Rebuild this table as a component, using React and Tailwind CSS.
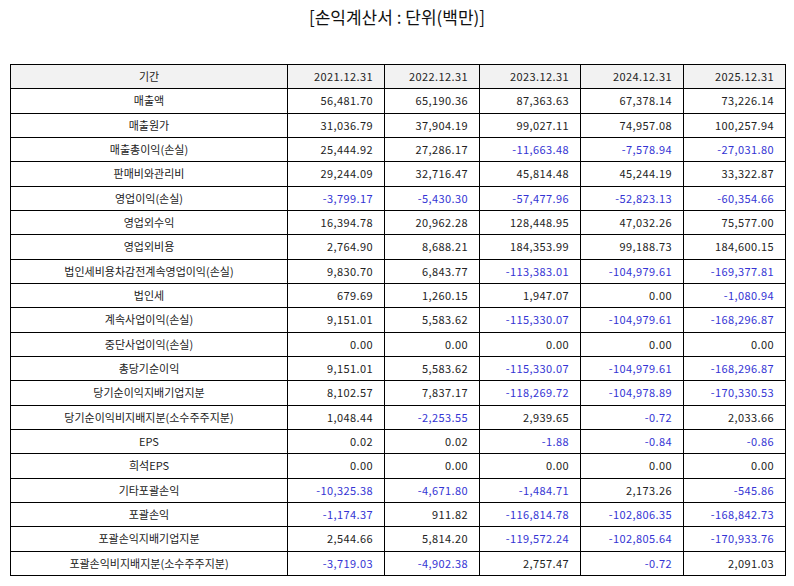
import React from 'react';

const YEARS = ['2021.12.31', '2022.12.31', '2023.12.31', '2024.12.31', '2025.12.31'];
const COL_W = ['w-[277px]', 'w-[97px]', 'w-[95px]', 'w-[101px]', 'w-[103px]', 'w-[102px]'];

const ROWS = [
  ['매출액', '56,481.70', '65,190.36', '87,363.63', '67,378.14', '73,226.14'],
  ['매출원가', '31,036.79', '37,904.19', '99,027.11', '74,957.08', '100,257.94'],
  ['매출총이익(손실)', '25,444.92', '27,286.17', '-11,663.48', '-7,578.94', '-27,031.80'],
  ['판매비와관리비', '29,244.09', '32,716.47', '45,814.48', '45,244.19', '33,322.87'],
  ['영업이익(손실)', '-3,799.17', '-5,430.30', '-57,477.96', '-52,823.13', '-60,354.66'],
  ['영업외수익', '16,394.78', '20,962.28', '128,448.95', '47,032.26', '75,577.00'],
  ['영업외비용', '2,764.90', '8,688.21', '184,353.99', '99,188.73', '184,600.15'],
  ['법인세비용차감전계속영업이익(손실)', '9,830.70', '6,843.77', '-113,383.01', '-104,979.61', '-169,377.81'],
  ['법인세', '679.69', '1,260.15', '1,947.07', '0.00', '-1,080.94'],
  ['계속사업이익(손실)', '9,151.01', '5,583.62', '-115,330.07', '-104,979.61', '-168,296.87'],
  ['중단사업이익(손실)', '0.00', '0.00', '0.00', '0.00', '0.00'],
  ['총당기순이익', '9,151.01', '5,583.62', '-115,330.07', '-104,979.61', '-168,296.87'],
  ['당기순이익지배기업지분', '8,102.57', '7,837.17', '-118,269.72', '-104,978.89', '-170,330.53'],
  ['당기순이익비지배지분(소수주주지분)', '1,048.44', '-2,253.55', '2,939.65', '-0.72', '2,033.66'],
  ['EPS', '0.02', '0.02', '-1.88', '-0.84', '-0.86'],
  ['희석EPS', '0.00', '0.00', '0.00', '0.00', '0.00'],
  ['기타포괄손익', '-10,325.38', '-4,671.80', '-1,484.71', '2,173.26', '-545.86'],
  ['포괄손익', '-1,174.37', '911.82', '-116,814.78', '-102,806.35', '-168,842.73'],
  ['포괄손익지배기업지분', '2,544.66', '5,814.20', '-119,572.24', '-102,805.64', '-170,933.76'],
  ['포괄손익비지배지분(소수주주지분)', '-3,719.03', '-4,902.38', '2,757.47', '-0.72', '2,091.03'],
];

export default function App() {
  return (
    <div className="w-[794px] h-[586px] bg-white text-[#222] font-['Noto_Sans_CJK_KR','Noto_Sans',sans-serif]">
      <h1 className="pt-[5px] h-[64px] text-center text-[17px] leading-[24px] text-[#111]">[손익계산서 : 단위(백만)]</h1>
      <table className="ml-[10px] border-collapse table-fixed text-[11px] leading-none">
        <thead>
          <tr className="h-[24.33px] bg-[#f2f2f2]">
            <th className={`${COL_W[0]} border border-black font-normal text-center`}>기간</th>
            {YEARS.map((y, i) => (
              <th key={y} className={`${COL_W[i + 1]} border border-black font-normal text-right pr-[11px] tracking-[0.4px]`}>{y}</th>
            ))}
          </tr>
        </thead>
        <tbody>
          {ROWS.map(([label, ...vals]) => (
            <tr key={label} className="h-[24.33px]">
              <td className="border border-black text-center">{label}</td>
              {vals.map((v, i) => (
                <td
                  key={i}
                  className={`border border-black text-right pr-[11px] tracking-[0.4px] ${v.startsWith('-') ? 'text-[#3434d4]' : ''}`}
                >
                  {v}
                </td>
              ))}
            </tr>
          ))}
        </tbody>
      </table>
    </div>
  );
}
